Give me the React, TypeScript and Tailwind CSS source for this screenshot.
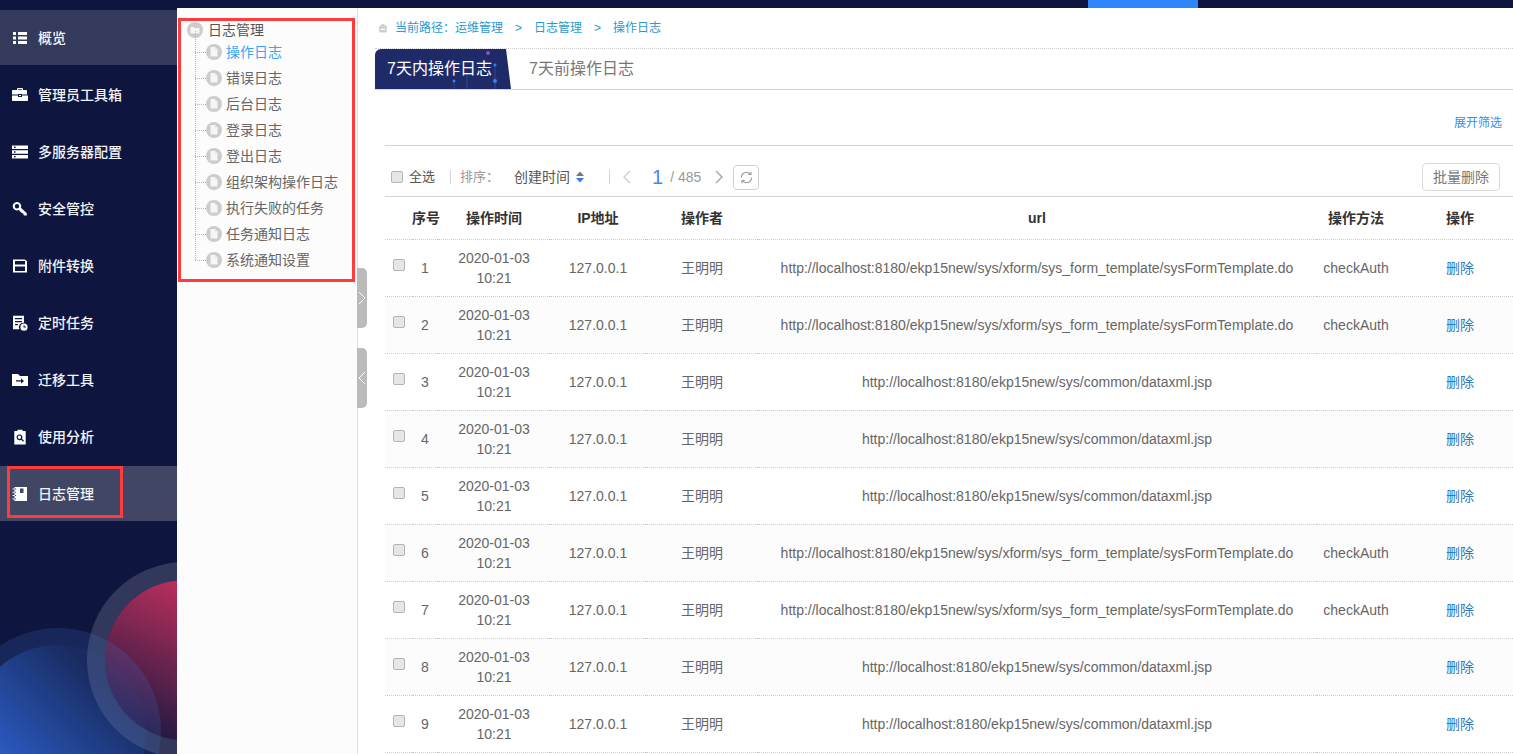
import React from 'react';

const Ico: React.FC<{ children: React.ReactNode }> = ({ children }) => (
  <svg viewBox="0 0 16 16" className="h-4 w-4 shrink-0 text-white" fill="currentColor">
    {children}
  </svg>
);

const navItems: { label: string; active?: string; icon: React.ReactNode }[] = [
  {
    label: '概览',
    active: 'bg-[#333a5c]',
    icon: (
      <Ico>
        <path d="M1 2h3v3H1zM6 2h9v3H6zM1 6.5h3v3H1zM6 6.5h9v3H6zM1 11h3v3H1zM6 11h9v3H6z" />
      </Ico>
    ),
  },
  {
    label: '管理员工具箱',
    icon: (
      <Ico>
        <path d="M5 3V2.2C5 1.5 5.5 1 6.2 1h3.6c.7 0 1.2.5 1.2 1.2V3h3c.6 0 1 .4 1 1v3.6H10V7H6v.6H.0V4c0-.6.4-1 1-1h4zm1.2 0h3.6v-.8H6.2V3z" />
        <path d="M0 8.6h6V10h4V8.6h6V13c0 .6-.4 1-1 1H1c-.6 0-1-.4-1-1V8.6z" />
        <path d="M7 8h2v1H7z" />
      </Ico>
    ),
  },
  {
    label: '多服务器配置',
    icon: (
      <Ico>
        <path
          fillRule="evenodd"
          d="M0 1.5h16v3.6H0zM2 2.6h1.5v1.4H2zM0 6.2h16v3.6H0zM2 7.3h1.5v1.4H2zM0 10.9h16v3.6H0zM2 12h1.5v1.4H2z"
        />
      </Ico>
    ),
  },
  {
    label: '安全管控',
    icon: (
      <Ico>
        <path
          fillRule="evenodd"
          d="M5 1a4.2 4.2 0 0 1 3.9 5.7l5.9 5.6v2.3h-2.5l-1-1v-1.3H10L6.7 9a4.2 4.2 0 1 1-1.7-8zM5 3a2.2 2.2 0 1 0 0 4.4A2.2 2.2 0 0 0 5 3z"
        />
      </Ico>
    ),
  },
  {
    label: '附件转换',
    icon: (
      <Ico>
        <path
          fillRule="evenodd"
          d="M1 1.5h12l2 2v11H1zM3 3v3.6h10V3zM3 8.6v4.4h10V8.6z"
        />
      </Ico>
    ),
  },
  {
    label: '定时任务',
    icon: (
      <Ico>
        <path
          fillRule="evenodd"
          d="M1 .8h11v7a4.4 4.4 0 0 0-4.6 6.4H1zM3 3v1.2h7V3zM3 6v1.2h7V6zM3 9v1.2h3V9z"
        />
        <path
          fillRule="evenodd"
          d="M12 8.6a3.6 3.6 0 1 1 0 7.2 3.6 3.6 0 0 1 0-7.2zm-.5 1.6v2.4h2.4v-1h-1.4v-1.4z"
        />
      </Ico>
    ),
  },
  {
    label: '迁移工具',
    icon: (
      <Ico>
        <path
          fillRule="evenodd"
          d="M0 2h6l2 2h8v10H0zM4 8.2v1.4h5V11.4l3-2.5-3-2.5v1.8z"
        />
      </Ico>
    ),
  },
  {
    label: '使用分析',
    icon: (
      <Ico>
        <path
          fillRule="evenodd"
          d="M5.5 2V.8h5V2h3.2v13.5H2.3V2zM7.4 5.4a2.9 2.9 0 1 0 1.7 5.3l2 2 .9-.9-2-2a2.9 2.9 0 0 0-2.6-4.4zm0 1.2a1.7 1.7 0 1 1 0 3.4 1.7 1.7 0 0 1 0-3.4z"
        />
      </Ico>
    ),
  },
  {
    label: '日志管理',
    active: 'bg-[#414664]',
    icon: (
      <Ico>
        <path
          fillRule="evenodd"
          d="M2.5 1h12.5v14H2.500V13.400H4v-1H2.500V10H4V9H2.500V6.800H4v-1H2.500V3.600H4v-1H2.500zM8 2.500v4.500h3.500V2.500z"
        />
        <path d="M.5 2.600H3v1H.5zM.5 5.800H3v1H.5zM.5 9H3v1H.5zM.5 12.400H3v1H.5z" />
      </Ico>
    ),
  },
];

const treeItems = [
  '操作日志',
  '错误日志',
  '后台日志',
  '登录日志',
  '登出日志',
  '组织架构操作日志',
  '执行失败的任务',
  '任务通知日志',
  '系统通知设置',
];

const longUrl = 'http://localhost:8180/ekp15new/sys/xform/sys_form_template/sysFormTemplate.do';
const shortUrl = 'http://localhost:8180/ekp15new/sys/common/dataxml.jsp';

const rows = [
  { no: 1, url: longUrl, method: 'checkAuth' },
  { no: 2, url: longUrl, method: 'checkAuth' },
  { no: 3, url: shortUrl, method: '' },
  { no: 4, url: shortUrl, method: '' },
  { no: 5, url: shortUrl, method: '' },
  { no: 6, url: longUrl, method: 'checkAuth' },
  { no: 7, url: longUrl, method: 'checkAuth' },
  { no: 8, url: shortUrl, method: '' },
  { no: 9, url: shortUrl, method: '' },
];

const CheckBox: React.FC = () => (
  <span className="inline-block h-3 w-3 rounded-[2px] border border-[#b4b4b4] bg-[#e6e6e6]"></span>
);

const DocDot: React.FC = () => (
  <svg viewBox="0 0 16 16" className="h-4 w-4 shrink-0">
    <circle cx="8" cy="8" r="8" fill="#cccccc" />
    <path d="M4.500 3h4.500l2.500 2.500V12.500h-7z" fill="#f6f6f6" />
    <path d="M9 3v2.500h2.500z" fill="#e2e2e2" />
  </svg>
);

const App: React.FC = () => {
  return (
    <div className="flex h-[754px] flex-col overflow-hidden bg-white font-['Liberation_Sans','Noto_Sans_CJK_SC',sans-serif] text-sm text-[#666]">
      {/* Top bar */}
      <div className="flex h-2 shrink-0 bg-[#0e1640]">
        <div className="ml-[1088px] w-[110px] bg-[#2f86fb]"></div>
      </div>

      <div className="relative flex min-h-0 flex-1">
        {/* Sidebar */}
        <aside className="relative w-[177px] shrink-0 overflow-hidden bg-[#0e1640] pt-[2px]">
          <svg viewBox="0 0 177 214" className="absolute bottom-0 left-0 h-[214px] w-[177px]">
            <defs>
              <linearGradient id="pink" x1="0.8" y1="0" x2="0.3" y2="1">
                <stop offset="0" stopColor="#d5335f" />
                <stop offset="1" stopColor="#d5335f" stopOpacity="0.08" />
              </linearGradient>
              <linearGradient id="blue" x1="0.1" y1="0.85" x2="0.75" y2="0.2">
                <stop offset="0" stopColor="#2e69dc" />
                <stop offset="1" stopColor="#2e69dc" stopOpacity="0.05" />
              </linearGradient>
            </defs>
            <circle cx="185" cy="120" r="98" fill="#ffffff" fillOpacity="0.15" />
            <circle cx="185" cy="120" r="80" fill="#0e1640" />
            <circle cx="185" cy="120" r="80" fill="url(#pink)" />
            <circle cx="58" cy="191" r="103" fill="#4d7bdc" fillOpacity="0.17" />
            <circle cx="58" cy="193" r="88" fill="url(#blue)" />
          </svg>
          <nav className="relative flex flex-col gap-[2px]">
            {navItems.map((item) => (
              <div
                key={item.label}
                className={`flex h-[55px] items-center gap-[10px] pl-3 font-medium text-[#f2f3f7] ${item.active ?? ''}`}
              >
                {item.icon}
                <span>{item.label}</span>
              </div>
            ))}
          </nav>
        </aside>

        {/* Tree panel */}
        <div className="relative w-[181px] shrink-0 border-r border-[#dddddd] bg-[#fcfcfc] pl-[10px] pt-[13px]">
          <div className="flex h-[18px] items-center gap-[5px]">
            <svg viewBox="0 0 16 16" className="h-4 w-4 shrink-0">
              <circle cx="8" cy="8" r="8" fill="#cccccc" />
              <path d="M3.500 5h3.200l1 1h4.800v5.500h-9z" fill="#f6f6f6" />
            </svg>
            <span className="text-[#555]">日志管理</span>
          </div>
          <ul className="relative ml-[8px]">
            <span className="absolute left-0 top-[-8px] bottom-[13px] border-l border-dotted border-[#b5b5b5]"></span>
            {treeItems.map((label, i) => (
              <li key={label} className="flex h-[26px] items-center">
                <span className="w-[11px] shrink-0 border-t border-dotted border-[#b5b5b5]"></span>
                <DocDot />
                <span className={`ml-1 whitespace-nowrap ${i === 0 ? 'text-[#3aa5f5]' : 'text-[#666]'}`}>{label}</span>
              </li>
            ))}
          </ul>

          {/* Collapse handles */}
          <div className="absolute left-full top-[260px] flex h-[60px] w-[10px] items-center justify-center rounded-r-[5px] bg-[#bbbbbb]">
            <svg viewBox="0 0 10 14" className="h-[14px] w-[10px]" fill="none" stroke="#ffffff" strokeWidth="1">
              <path d="M2 1l6 6-6 6" />
            </svg>
          </div>
          <div className="absolute left-full top-[340px] flex h-[60px] w-[10px] items-center justify-center rounded-r-[5px] bg-[#bbbbbb]">
            <svg viewBox="0 0 10 14" className="h-[14px] w-[10px]" fill="none" stroke="#ffffff" strokeWidth="1">
              <path d="M8 1L2 7l6 6" />
            </svg>
          </div>
        </div>

        {/* Main */}
        <main className="min-w-0 flex-1 pl-[17px]">
          {/* Breadcrumb */}
          <div className="flex h-[41px] items-center border-b border-dotted border-[#cccccc] pl-[3px] text-xs text-[#2b9ad0]">
            <svg viewBox="0 0 12 12" className="mr-[7px] h-[10px] w-[10px] shrink-0" fill="#cfcfcf">
              <path d="M6 .5L12 5.500H10.500V11.500H1.500V5.500H0zM3.500 7v1.500h5V7z" />
            </svg>
            <span>当前路径：运维管理</span>
            <span className="ml-3">&gt;</span>
            <span className="ml-3">日志管理</span>
            <span className="ml-3">&gt;</span>
            <span className="ml-3">操作日志</span>
          </div>

          {/* Tabs */}
          <div className="flex h-[41px] items-stretch border-b border-[#d5d5d5] text-base">
            <div className="relative flex w-[136px] items-center overflow-hidden rounded-tl-md bg-[#1f2a68] pl-3 text-white [clip-path:polygon(0_0,131px_0,136px_100%,0_100%)]">
              <svg viewBox="0 0 136 40" className="absolute inset-0 h-10 w-[136px]">
                <path d="M79 34v6M92 24v16M120 14v26" stroke="#2e6bd0" strokeOpacity="0.5" />
                <circle cx="113" cy="4" r="2" fill="#7a5bb0" />
                <circle cx="120" cy="16" r="1.500" fill="#2f7fe0" />
                <circle cx="79" cy="32" r="1.500" fill="#2f8ae8" />
                <circle cx="120" cy="32" r="2" fill="#2f8ae8" />
              </svg>
              <span className="relative">7天内操作日志</span>
            </div>
            <div className="flex items-center pl-[18px] text-[#777]">7天前操作日志</div>
          </div>

          <div className="ml-[10px]">
            {/* Filter row */}
            <div className="flex h-[56px] items-end justify-end border-b border-[#d5d5d5] pb-[14px] pr-[11px] text-xs text-[#3b8cf0]">
              展开筛选
            </div>

            {/* Toolbar */}
            <div className="flex h-[51px] items-center border-b border-[#d5d5d5] pl-[6px] pr-[13px] pt-3 text-[13px]">
              <CheckBox />
              <span className="ml-[6px] text-[#555]">全选</span>
              <span className="ml-[15px] h-[14px] w-px bg-[#d5d5d5]"></span>
              <span className="ml-[9px] text-[#999]">排序：</span>
              <span className="ml-[15px] text-sm text-[#555]">创建时间</span>
              <svg viewBox="0 0 8 12" className="ml-[6px] h-3 w-2">
                <path d="M4 .5L8 5H0z" fill="#777" />
                <path d="M4 11.500L0 7h8z" fill="#2f7fe0" />
              </svg>
              <span className="ml-[25px] h-[14px] w-px bg-[#d5d5d5]"></span>
              <svg viewBox="0 0 8 14" className="ml-[13px] h-[14px] w-2" fill="none" stroke="#d0d0d0" strokeWidth="1.500">
                <path d="M7 1L1 7l6 6" />
              </svg>
              <span className="ml-[21px] text-xl leading-none text-[#3b8cf0]">1</span>
              <span className="ml-[7px] text-sm text-[#999]">/ 485</span>
              <svg viewBox="0 0 8 14" className="ml-[14px] h-[14px] w-2" fill="none" stroke="#aaaaaa" strokeWidth="1.500">
                <path d="M1 1l6 6-6 6" />
              </svg>
              <div className="ml-[10px] flex h-[25px] w-[26px] items-center justify-center rounded-[4px] border border-[#d0d0d0]">
                <svg viewBox="0 0 16 16" className="h-[15px] w-[15px]" fill="none" stroke="#9a9a9a" strokeWidth="1.200">
                  <path d="M2.500 8a5.500 5.500 0 0 1 9.600-3.700" />
                  <path d="M13.500 8a5.500 5.500 0 0 1-9.600 3.700" />
                  <path d="M12.800 1.800v3h-3" />
                  <path d="M3.200 14.200v-3h3" />
                </svg>
              </div>
              <button className="ml-auto h-7 w-[78px] rounded-[4px] border border-[#d9d9d9] text-sm text-[#777]">批量删除</button>
            </div>

            {/* Table */}
            <table className="w-[1128px] table-fixed text-center">
              <colgroup>
                <col className="w-[27px]" />
                <col className="w-[26px]" />
                <col className="w-[112px]" />
                <col className="w-[96px]" />
                <col className="w-[112px]" />
                <col className="w-[558px]" />
                <col className="w-[80px]" />
                <col className="w-[117px]" />
              </colgroup>
              <thead>
                <tr className="h-[42px] border-b border-dotted border-[#cccccc] font-bold text-[#333]">
                  <th></th>
                  <th className="whitespace-nowrap">序号</th>
                  <th>操作时间</th>
                  <th>IP地址</th>
                  <th>操作者</th>
                  <th>url</th>
                  <th className="whitespace-nowrap">操作方法</th>
                  <th className="pl-[11px]">操作</th>
                </tr>
              </thead>
              <tbody>
                {rows.map((row) => (
                  <tr
                    key={row.no}
                    className={`h-[57px] border-b border-dotted border-[#cccccc] ${row.no % 2 === 0 ? 'bg-[#fcfcfc]' : ''}`}
                  >
                    <td className="pb-1 pl-2 text-left">
                      <CheckBox />
                    </td>
                    <td>{row.no}</td>
                    <td className="leading-5">
                      2020-01-03
                      <br />
                      10:21
                    </td>
                    <td>127.0.0.1</td>
                    <td>王明明</td>
                    <td className="whitespace-nowrap">{row.url}</td>
                    <td>{row.method}</td>
                    <td className="pl-[11px] text-[#2f7ab8]">删除</td>
                  </tr>
                ))}
              </tbody>
            </table>
          </div>
        </main>

        {/* Red annotation boxes */}
        <div className="pointer-events-none absolute left-[178px] top-[10px] h-[264px] w-[177px] border-[3px] border-[#ff3b3b]"></div>
        <div className="pointer-events-none absolute left-[7px] top-[458px] h-[52px] w-[116px] border-[3px] border-[#ff3b3b]"></div>
      </div>
    </div>
  );
};

export default App;
